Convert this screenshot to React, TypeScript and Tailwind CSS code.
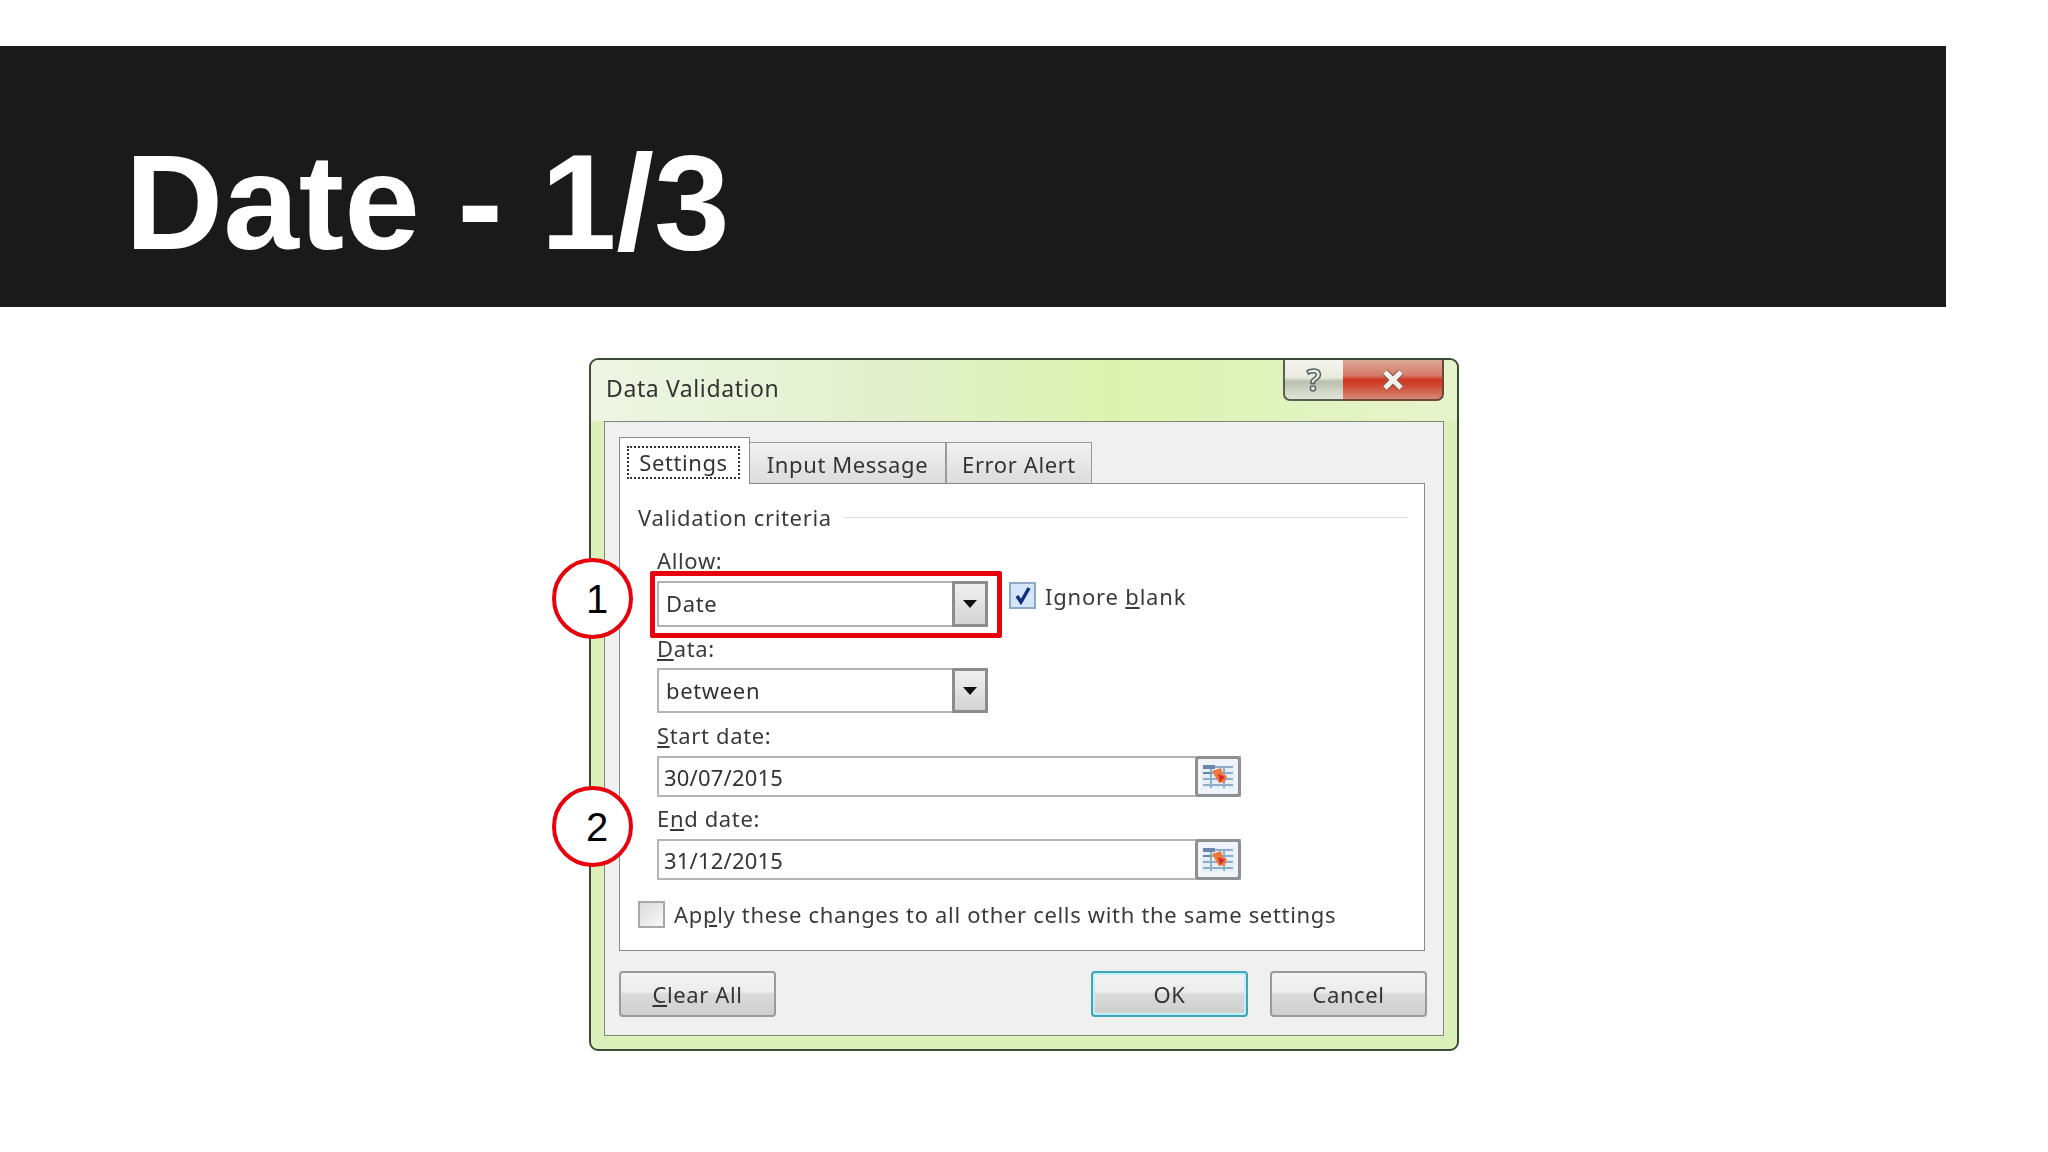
import React from 'react';

const uiFont = "[font-family:'Noto_Sans',sans-serif]";

const Label = ({ children, className = '' }: { children: React.ReactNode; className?: string }) => (
  <div className={`h-[24px] leading-[24px] text-[22px] tracking-[0.65px] text-[#3a3a3a] ${className}`}>{children}</div>
);

const Combo = ({ value, height }: { value: string; height: string }) => (
  <div className={`flex w-[331px] border-2 border-[#b4b4b4] bg-white ${height}`}>
    <div className="flex-1 pl-[7px] text-[22px] tracking-[0.65px] leading-[41px] text-[#333]">{value}</div>
    <div className="flex w-[36px] items-center justify-center border-[3px] border-[#8c8c8c] bg-linear-to-b from-[#f0f0f0] to-[#d4d4d4] -my-[2px] -mr-[2px]">
      <svg width="16" height="10" viewBox="0 0 16 10">
        <path d="M1 1h14L8 9z" fill="#111" />
      </svg>
    </div>
  </div>
);

// small "collapse dialog" button at the end of the reference fields
const RangeButton = () => (
  <div className="flex h-full w-[46px] items-center justify-center rounded-[4px] border-[3px] border-[#8f8f8f] bg-[#eef4fa]">
    <svg width="34" height="28" viewBox="0 0 34 28">
      <rect x="1" y="2" width="32" height="24" fill="#e6eff7" />
      <path d="M2 4h30M2 10h30M2 16h30M2 22h30M10 3v22M23 3v22" stroke="#8fadc8" strokeWidth="2" fill="none" />
      <path d="M2 4h12" stroke="#6a86a8" strokeWidth="4" />
      <path d="M2 10h8" stroke="#6a86a8" strokeWidth="2" />
      <path d="M11 8l9-3 2 6 4 2-2 6-6 1-3-5z" fill="#ec7a3a" />
      <path d="M17 11l7 3-5 5z" fill="#cf2a30" />
    </svg>
  </div>
);

const DateField = ({ value }: { value: string }) => (
  <div className="flex h-[41px] w-[584px] items-stretch border-2 border-[#b4b4b4] bg-white">
    <div className="flex-1 pl-[5px] text-[22px] tracking-[0.2px] leading-[38px] text-[#333]">{value}</div>
    <div className="-my-[2px] -mr-[2px]">
      <RangeButton />
    </div>
  </div>
);

const WinButton = ({ children, primary = false, className = '' }: { children: React.ReactNode; primary?: boolean; className?: string }) => (
  <div
    className={`flex h-[46px] w-[157px] items-center justify-center rounded-[4px] border-2 text-[22px] tracking-[0.6px] text-[#333] bg-[linear-gradient(#f4f4f4_0%,#ececec_45%,#dadada_50%,#cfcfcf_100%)] ${
      primary ? 'border-[#3fa5b8] shadow-[inset_0_0_0_2px_#bff0f5]' : 'border-[#9a9a9a]'
    } ${className}`}
  >
    {children}
  </div>
);

const Callout = ({ n, className }: { n: string; className: string }) => (
  <div className={`absolute left-[-39px] flex h-[81px] w-[81px] items-center justify-center rounded-full border-[4px] border-[#e8000d] bg-white pl-[9px] text-[40px] text-black [font-family:'Liberation_Sans',sans-serif] ${className}`}>
    {n}
  </div>
);

export default function App() {
  return (
    <div className="h-[1152px] w-[2048px] overflow-hidden bg-white">
      <header className="mt-[46px] h-[261px] w-[1946px] bg-[#1a1a1a] pl-[125px] pt-[88px]">
        <h1 className="text-[136px] font-bold leading-none text-white [font-family:'Liberation_Sans',sans-serif]">Date - 1/3</h1>
      </header>

      {/* Excel dialog */}
      <div className={`relative ml-[589px] mt-[51px] h-[693px] w-[870px] rounded-[9px] border-2 border-[#3f4a36] bg-[#dcf0bc] ${uiFont}`}>
        <div className="flex h-[61px] rounded-t-[8px] bg-[linear-gradient(90deg,#eef5e4_0%,#e2f0cc_35%,#dcf3b0_60%,#e6f4cc_100%)] blur-[0.4px]">
          <div className="flex-1 pl-[15px] pt-[12px] text-[23px] tracking-[0.6px] leading-[32px] text-[#333]">Data Validation</div>
          <div className="mr-[13px] flex h-[41px]">
            <div className="flex w-[60px] items-center justify-center rounded-bl-[7px] border-b-2 border-l-2 border-[#59604f] bg-[linear-gradient(#f4f5ef_0%,#e8eadf_45%,#b9c0ad_55%,#e3e6d9_100%)] text-[30px] font-bold leading-none text-[#e8ebe2] [-webkit-text-stroke:1.5px_#59615f]">
              ?
            </div>
            <div className="flex w-[101px] items-center justify-center rounded-br-[7px] border-b-2 border-r-2 border-[#6b4a3c] bg-[linear-gradient(#dca99a_0%,#d67a66_40%,#cf3a22_50%,#d0412a_62%,#d68a78_100%)]">
              <svg width="26" height="24" viewBox="0 0 26 24">
                <path d="M5 4l16 16M21 4L5 20" stroke="#7a5a50" strokeWidth="7" />
                <path d="M5 4l16 16M21 4L5 20" stroke="#f4f0ea" strokeWidth="5" />
              </svg>
            </div>
          </div>
        </div>

        {/* Panel */}
        <div className="mx-[13px] h-[615px] border border-[#7f8a75] bg-[#f0f0f1] pl-[14px] pr-[16px] pt-[15px] blur-[0.4px]">
          <div className="flex h-[46px] items-end text-[22px] tracking-[0.6px] text-[#333]">
            <div className="relative z-10 -mb-px flex h-[47px] w-[131px] items-start border border-b-0 border-[#8a8a8a] bg-white pl-[7px] pt-[8px]">
              <span className="flex h-[33px] w-[113px] items-center justify-center border-2 border-dotted border-[#333]">Settings</span>
            </div>
            <div className="flex h-[41px] w-[197px] items-center justify-center border-r-2 border-t border-[#9a9a9a] bg-linear-to-b from-[#f2f2f2] to-[#dcdcdc] pt-[2px]">Input Message</div>
            <div className="flex h-[41px] w-[145px] items-center justify-center border-r border-t border-[#9a9a9a] bg-linear-to-b from-[#f2f2f2] to-[#dcdcdc] pt-[2px]">Error Alert</div>
          </div>

          <div className="h-[468px] w-[806px] border border-[#8a8a8a] bg-white pt-[21px]">
            <div className="flex items-center pl-[18px] pr-[16px]">
              <Label>Validation criteria</Label>
              <div className="ml-[12px] h-px flex-1 bg-[#dcdcdc]" />
            </div>

            <div className="pl-[37px]">
              <Label className="mt-[19px]">Allow:</Label>
              <div className="mt-[9px] flex items-start">
                <Combo value="Date" height="h-[46px]" />
                <div className="ml-[21px] mt-px flex h-[27px] w-[27px] items-center justify-center border-2 border-[#8fa8c8] bg-[#d4e6fa]">
                  <svg width="20" height="20" viewBox="0 0 20 20">
                    <path d="M4 10l4 6 8-14" stroke="#12307a" strokeWidth="3.5" fill="none" />
                  </svg>
                </div>
                <div className="ml-[9px] mt-[2px] text-[22px] tracking-[0.8px] leading-[26px] text-[#3a3a3a]">
                  Ignore <u>b</u>lank
                </div>
              </div>

              <Label className="mt-[9px]"><u>D</u>ata:</Label>
              <div className="mt-[8px]">
                <Combo value="between" height="h-[45px]" />
              </div>

              <Label className="mt-[10px]"><u>S</u>tart date:</Label>
              <div className="mt-[9px]">
                <DateField value="30/07/2015" />
              </div>

              <Label className="mt-[9px]">E<u>n</u>d date:</Label>
              <div className="mt-[9px]">
                <DateField value="31/12/2015" />
              </div>
            </div>

            <div className="ml-[18px] mt-[21px] flex items-center">
              <div className="h-[27px] w-[27px] border-2 border-[#a8a8a8] bg-linear-to-br from-[#dcdcdc] to-[#f8f8f8]" />
              <div className="ml-[9px] text-[22px] tracking-[0.67px] leading-[27px] text-[#3a3a3a]">
                Ap<u>p</u>ly these changes to all other cells with the same settings
              </div>
            </div>
          </div>

          <div className="mt-[20px] flex w-[808px]">
            <WinButton><span><u>C</u>lear All</span></WinButton>
            <WinButton primary className="ml-auto">OK</WinButton>
            <WinButton className="ml-[22px]">Cancel</WinButton>
          </div>
        </div>

        {/* annotations on top of the dialog */}
        <div className="absolute left-[59px] top-[211px] h-[67px] w-[352px] rounded-[2px] border-[5px] border-[#e8000d]" />
        <Callout n="1" className="top-[198px]" />
        <Callout n="2" className="top-[426px]" />
      </div>
    </div>
  );
}
